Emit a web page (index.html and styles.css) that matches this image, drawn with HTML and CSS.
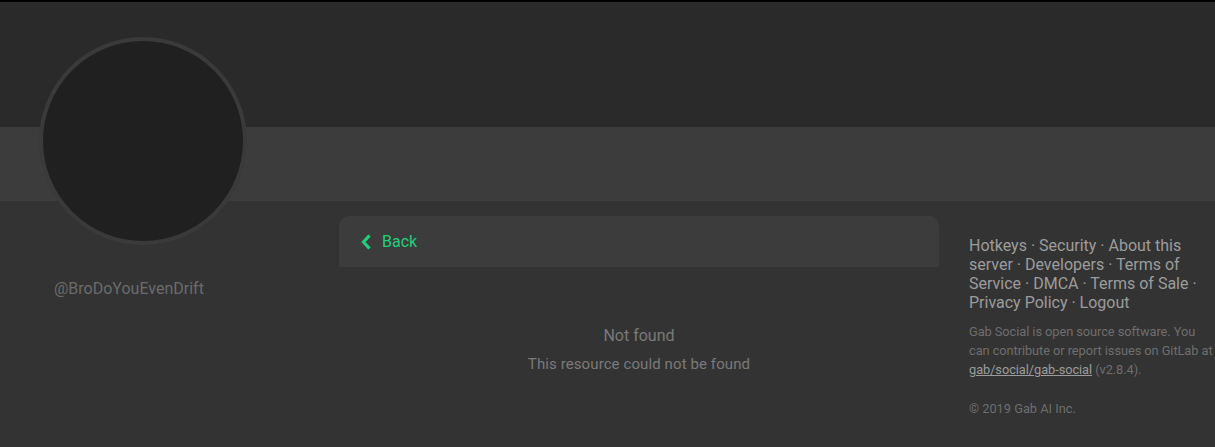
FILE: index.html
```html
<!DOCTYPE html>
<html lang="en">
<head>
    <meta charset="UTF-8">
    <title>@BroDoYouEvenDrift - Gab Social</title>
    <link rel="stylesheet" href="styles.css">
</head>
<body>
    <header class="profile-header">
        <div class="cover"></div>
        <div class="tabs-bar"></div>
        <div class="avatar"></div>
    </header>

    <div class="layout">
        <aside class="sidebar">
            <div class="username">@BroDoYouEvenDrift</div>
        </aside>

        <main class="content">
            <div class="back-bar">
                <a class="back-link" href="#">
                    <svg class="chevron" width="10" height="16" viewBox="0 0 10 16">
                        <path d="M8.5 1.5 L2.5 8 L8.5 14.5" fill="none" stroke="currentColor" stroke-width="3.2" stroke-linejoin="miter"/>
                    </svg>
                    Back
                </a>
            </div>
            <div class="missing">
                <div class="missing-title">Not found</div>
                <div class="missing-text">This resource could not be found</div>
            </div>
        </main>

        <aside class="links">
            <p class="footer-links">Hotkeys · Security · About this server · Developers · Terms of Service · DMCA · Terms of Sale · Privacy Policy · Logout</p>
            <p class="footer-info">Gab Social is open source software. You can contribute or report issues on GitLab at <a href="#">gab/social/gab-social</a> (v2.8.4).</p>
            <p class="footer-copy">© 2019 Gab AI Inc.</p>
        </aside>
    </div>
</body>
</html>
```

FILE: styles.css
```css
body {
    font-family: Roboto, "Liberation Sans", sans-serif;
    margin: 0;
    padding: 0;
    background-color: #333333;
    overflow: hidden;
}
.profile-header {
    position: relative;
    border-top: 2px solid #000;
}
.cover {
    height: 125px;
    background-color: #2a2a2a;
}
.tabs-bar {
    height: 74px;
    background-color: #3c3c3c;
}
.avatar {
    position: absolute;
    left: 39px;
    top: 35px;
    width: 200px;
    height: 200px;
    border: 4px solid #3a3a3a;
    border-radius: 50%;
    background-color: #202020;
}
.layout {
    display: flex;
    padding-top: 15px;
}
.sidebar {
    width: 339px;
    flex-shrink: 0;
}
.username {
    padding: 63px 0 0 54px;
    font-size: 16px;
    line-height: 19px;
    color: #6b6b6b;
}
.content {
    width: 600px;
    flex-shrink: 0;
}
.back-bar {
    height: 51px;
    display: flex;
    align-items: center;
    padding-left: 22px;
    background-color: #3c3c3c;
    border-radius: 10px 10px 0 0;
}
.back-link {
    display: flex;
    align-items: center;
    gap: 11px;
    color: #21cf7a;
    font-size: 16px;
    text-decoration: none;
}
.missing {
    text-align: center;
    color: #7a7a7a;
    margin-top: 59px;
}
.missing-title {
    font-size: 16px;
    line-height: 19px;
}
.missing-text {
    font-size: 15px;
    line-height: 18px;
    margin-top: 10px;
    letter-spacing: 0.1px;
}
.links {
    width: 246px;
    flex-shrink: 0;
    margin-left: 30px;
    padding-top: 20px;
}
.links p {
    margin: 0;
}
.footer-links {
    font-size: 16px;
    line-height: 19px;
    color: #9c9c9c;
}
.footer-info {
    margin-top: 10px !important;
    font-size: 12.8px;
    line-height: 19px;
    letter-spacing: -0.06px;
    color: #6e6e6e;
}
.footer-info a {
    color: #9c9c9c;
}
.footer-copy {
    margin-top: 20px !important;
    font-size: 12.8px;
    line-height: 19px;
    color: #6e6e6e;
}
```
